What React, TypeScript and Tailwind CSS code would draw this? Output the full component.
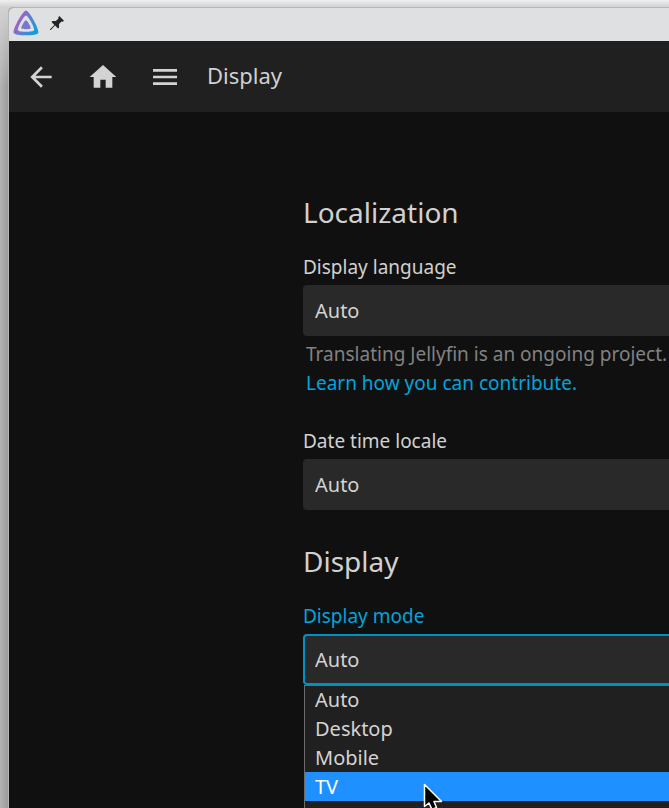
import type { ReactNode } from 'react';

const modes = ['Auto', 'Desktop', 'Mobile', 'TV', 'Experimental'];

function Logo() {
  return (
    <svg className="h-[26px] w-[26px]" viewBox="0 0 26 26" aria-hidden="true">
      <defs>
        <linearGradient id="brand" x1="4" y1="10" x2="22" y2="20" gradientUnits="userSpaceOnUse">
          <stop offset="0" stopColor="#a95fc4" />
          <stop offset="1" stopColor="#119fdc" />
        </linearGradient>
      </defs>
      <path
        fillRule="evenodd"
        fill="url(#brand)"
        d="M13 .4C9.800.4-.8 19.700.7 22.900 2.200 26 23.800 26 25.300 22.900 26.800 19.800 16.200.4 13 .4ZM21.100 20.200C20.100 22.200 5.900 22.200 4.900 20.200 3.900 18.200 10.900 5.500 13 5.500 15.100 5.500 22.100 18.200 21.100 20.200Z"
      />
      <path fill="#7877cb" d="M13 10.200c-1.300 0-5.200 6.900-4.600 8.100.6 1.200 8.600 1.200 9.200 0 .6-1.200-3.400-8.100-4.600-8.100Z" />
    </svg>
  );
}

function HeaderButton({ label, path }: { label: string; path: string }) {
  return (
    <button type="button" aria-label={label} className="flex h-12 w-12 items-center justify-center">
      <svg className="h-8 w-8 fill-[#d3d3d3]" viewBox="0 0 24 24" aria-hidden="true">
        <path d={path} />
      </svg>
    </button>
  );
}

function Field({
  id,
  label,
  options,
  active = false,
  children,
}: {
  id: string;
  label: string;
  options: string[];
  active?: boolean;
  children?: ReactNode;
}) {
  return (
    <div className="relative">
      <label htmlFor={id} className={`block text-[19px] leading-7 ${active ? 'text-[#00a4dc]' : 'text-[#d1d1d1]'}`}>
        {label}
      </label>
      <select
        id={id}
        className={`mt-1 block h-[51px] w-full appearance-none rounded-l-[4px] border-y-2 border-l-2 bg-[#292929] pl-[10px] text-xl text-[#d3d3d3] outline-none ${
          active ? 'border-[#0090c1]' : 'border-[#292929]'
        }`}
      >
        {options.map((option) => (
          <option key={option}>{option}</option>
        ))}
      </select>
      {children}
    </div>
  );
}

export default function App() {
  return (
    <div className="relative flex min-h-screen flex-col overflow-hidden bg-[linear-gradient(90deg,#b4b4b4,#989898_9px)] font-['Noto_Sans',sans-serif]">
      <div className="h-[7px] bg-linear-to-b from-[#f0f0f0] to-[#d2d2d2]" />
      <div className="flex flex-1 flex-col bg-[linear-gradient(180deg,#d2d2d2,transparent_80px)] pl-2">
        <div className="flex flex-1 flex-col rounded-tl-[5px] border-t border-l border-[#b4b8b8] bg-[#101010]">
          <div className="flex h-[33px] items-center gap-2.5 rounded-tl-[4px] bg-[#dee0e2] pl-1">
            <span className="-mt-1">
              <Logo />
            </span>
            <button type="button" aria-label="Pin window" className="-mt-1">
              <svg className="h-4 w-4 fill-[#232629]" viewBox="0 0 16 16" aria-hidden="true">
                <path d="M10.300 1 15 5.700 13.700 6.700 12.500 6.500 10 9.100 10.100 12.400 9 13.500 6.100 10.600 1.800 14.900.9 15.100 1.100 14.200 5.400 9.900 2.500 7 3.600 5.900 6.900 6 9.500 3.500 9.300 2.300Z" />
              </svg>
            </button>
          </div>

          <header className="flex h-[71px] items-center gap-[14px] bg-[#202020] pl-2">
            <HeaderButton label="Back" path="M20 11H7.830l5.590-5.590L12 4l-8 8 8 8 1.410-1.410L7.830 13H20v-2z" />
            <HeaderButton label="Home" path="M10 20v-6h4v6h5v-8h3L12 3 2 12h3v8z" />
            <HeaderButton label="Menu" path="M3 18h18v-2H3v2zm0-5h18v-2H3v2zm0-7v2h18V6H3z" />
            <h1 className="ml-1 pb-[3px] text-[22px] leading-8 text-[#d1d1d1]">Display</h1>
          </header>

          <main className="flex-1 pt-20 pl-[294px]">
            <section>
              <h2 className="text-[28px] leading-10 text-[#d1d1d1]">Localization</h2>
              <div className="mt-[21px]">
                <Field id="language" label="Display language" options={['Auto']} />
                <div className="mt-1 pl-[3px] text-[19px] leading-[29px]">
                  <p className="whitespace-nowrap text-[#828282]">Translating Jellyfin is an ongoing project.</p>
                  <a href="#contribute" className="text-[#00a4dc]">
                    Learn how you can contribute.
                  </a>
                </div>
              </div>
              <div className="mt-[29px]">
                <Field id="locale" label="Date time locale" options={['Auto']} />
              </div>
            </section>

            <section className="mt-[31px]">
              <h2 className="text-[28px] leading-10 text-[#d1d1d1]">Display</h2>
              <div className="mt-[21px]">
                <Field id="mode" label="Display mode" options={modes} active>
                  <ul
                    role="listbox"
                    aria-label="Display mode"
                    className="absolute top-full right-0 left-px border-l border-[#6b6b6b] bg-[#202020] text-xl text-[#d3d3d3] shadow-[inset_0_1px_0_#6b6b6b]"
                  >
                    {modes.map((mode) => (
                      <li
                        key={mode}
                        role="option"
                        aria-selected={mode === 'TV'}
                        className={`h-[29px] pl-[10px] leading-[30px] ${mode === 'TV' ? 'bg-[#1e90ff] text-white' : ''}`}
                      >
                        {mode}
                      </li>
                    ))}
                  </ul>
                </Field>
              </div>
            </section>
          </main>
        </div>
      </div>

      <svg className="absolute top-[783px] left-[423px] h-[30px] w-5" viewBox="0 0 20 30" aria-hidden="true">
        <path
          d="M1.500 1.500v22l4.500-3.500 3 6.500 4.500-2-2.500-6h7.500Z"
          fill="#000"
          stroke="#fff"
          strokeWidth="1.500"
          strokeLinejoin="round"
        />
      </svg>
    </div>
  );
}
